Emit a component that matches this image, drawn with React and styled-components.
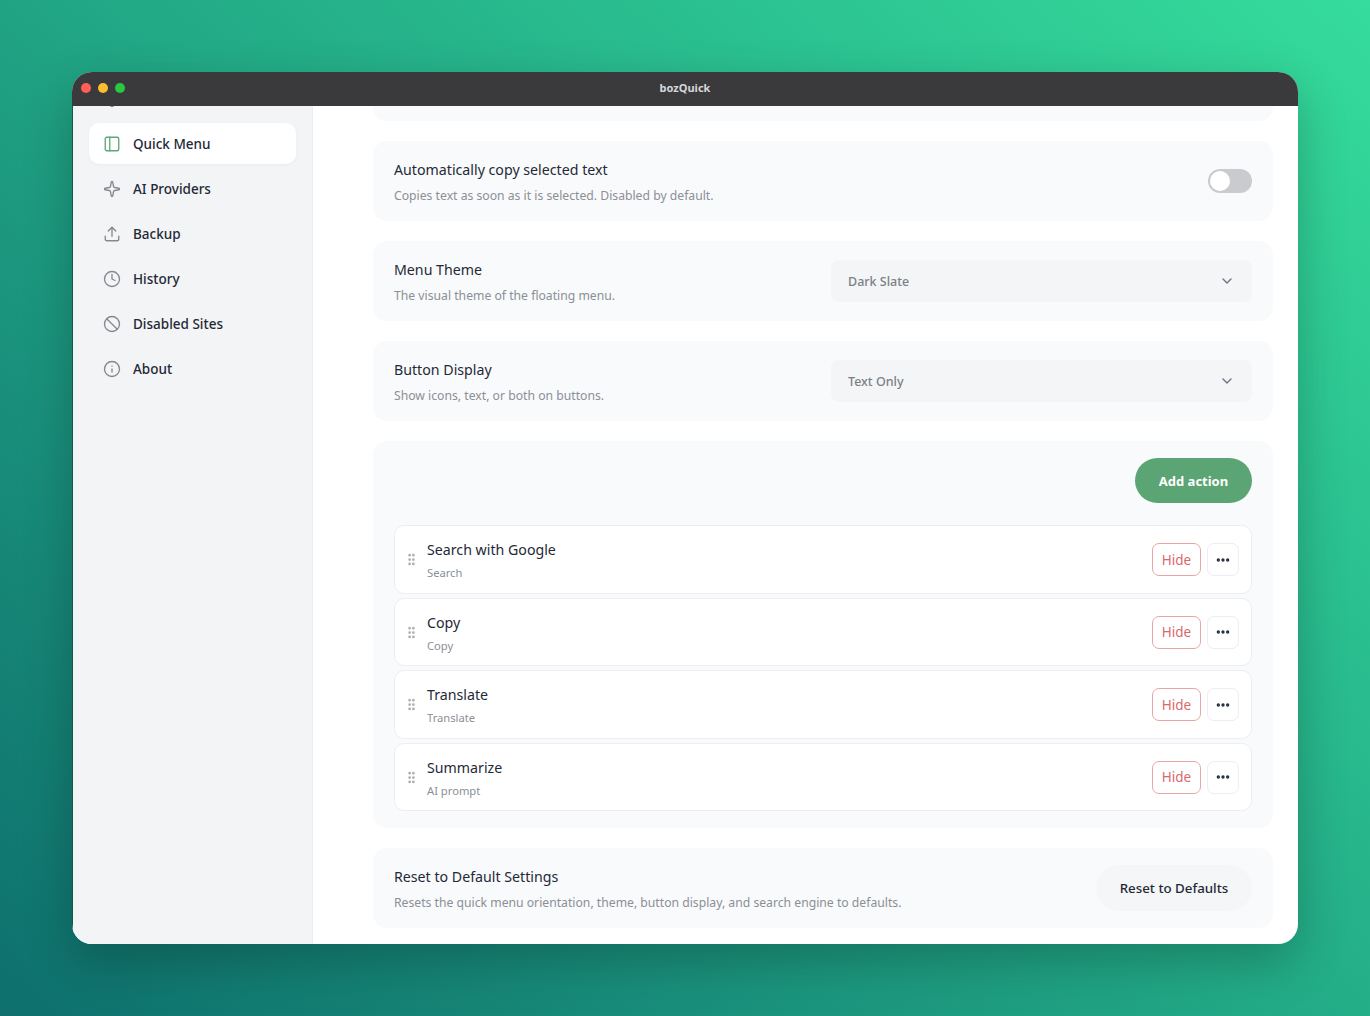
import React from "react";
import styled, { createGlobalStyle } from "styled-components";
import { PanelLeft, Sparkle, Upload, Clock, Ban, Info, ChevronDown, GripVertical, Ellipsis, Settings } from "lucide-react";

const GlobalStyle = createGlobalStyle`
    html, body {
        margin: 0;
        padding: 0;
    }
    body {
        font-family: "Noto Sans", "Open Sans", sans-serif;
        color: #1f2937;
    }
    * {
        box-sizing: border-box;
    }
`;

const Backdrop = styled.div`
    width: 1370px;
    height: 1016px;
    padding: 72px;
    overflow: hidden;
    background: linear-gradient(222deg, #35dc9c 0%, #22a986 50%, #0e6f6d 100%);
`;

const Window = styled.div`
    width: 1226px;
    height: 872px;
    border-radius: 20px;
    overflow: hidden;
    display: flex;
    flex-direction: column;
    background: #fff;
    box-shadow: 0 18px 50px rgba(0, 0, 0, 0.24);
`;

const TitleBar = styled.div`
    position: relative;
    flex: 0 0 34px;
    display: flex;
    align-items: center;
    justify-content: center;
    padding-bottom: 3px;
    background: #3a3a3c;
    z-index: 1;
`;

const Lights = styled.div`
    position: absolute;
    left: 8.5px;
    top: 11px;
    display: flex;
    gap: 7px;
`;

const Light = styled.span`
    width: 10px;
    height: 10px;
    border-radius: 50%;
    background: ${props => props.color};
`;

const WindowTitle = styled.span`
    font-size: 11px;
    font-weight: 700;
    color: #d6d6d8;
`;

const Body = styled.div`
    flex: 1;
    display: flex;
    min-height: 0;
`;

const Sidebar = styled.nav`
    flex: 0 0 241px;
    overflow: hidden;
    padding: 0 16px;
    background: #f3f4f6;
    border-left: 1px solid #17544c;
    border-right: 1px solid #eceef0;
`;

const NavList = styled.div`
    margin-top: -28px;
    display: flex;
    flex-direction: column;
    gap: 4px;
`;

const NavItem = styled.div`
    height: 41px;
    display: flex;
    align-items: center;
    gap: 12px;
    padding: 0 14px;
    border-radius: 10px;
    font-size: 13.5px;
    font-weight: 500;
    color: #1f2937;
    background: ${props => (props.$active ? "#fff" : "transparent")};
    box-shadow: ${props => (props.$active ? "0 1px 3px rgba(0, 0, 0, 0.04)" : "none")};

    svg {
        flex: none;
        color: ${props => (props.$active ? "#5fa777" : "#85898f")};
    }
`;

const Content = styled.main`
    flex: 1;
    overflow: hidden;
    padding: 0 25px 0 60px;
    display: flex;
    flex-direction: column;
    gap: 20px;
`;

const ClippedCard = styled.div`
    flex: 0 0 15px;
    background: #f9fafb;
    border-radius: 0 0 14px 14px;
`;

const Card = styled.section`
    flex: none;
    height: 80px;
    display: flex;
    align-items: center;
    justify-content: space-between;
    padding: 0 21px;
    background: #f9fafb;
    border-radius: 14px;
`;

const CardText = styled.div`
    display: flex;
    flex-direction: column;
    gap: 6px;
    padding-top: 3px;
`;

const CardTitle = styled.div`
    font-size: 14.2px;
    line-height: 20px;
    color: #1f2937;
`;

const CardHint = styled.div`
    font-size: 12.2px;
    line-height: 20px;
    color: #8b8f96;
`;

const Toggle = styled.div`
    width: 44px;
    height: 24px;
    padding: 2px;
    border-radius: 12px;
    background: #c9cbcf;
`;

const ToggleKnob = styled.div`
    width: 20px;
    height: 20px;
    border-radius: 50%;
    background: #fff;
`;

const Select = styled.div`
    width: 421px;
    height: 42px;
    display: flex;
    align-items: center;
    justify-content: space-between;
    padding: 0 17px;
    border-radius: 8px;
    background: #f4f5f7;
    font-size: 12.5px;
    font-weight: 500;
    color: #7b7f86;

    svg {
        color: #6b7280;
    }
`;

const ActionsCard = styled.section`
    flex: none;
    height: 387px;
    display: flex;
    flex-direction: column;
    padding: 17px 21px;
    background: #f9fafb;
    border-radius: 14px;
`;

const ActionsHeader = styled.div`
    display: flex;
    justify-content: flex-end;
    margin-bottom: 22.25px;
`;

const AddButton = styled.button`
    width: 117px;
    height: 45px;
    border: 0;
    border-radius: 23px;
    background: #5ba574;
    color: #fff;
    font-family: inherit;
    font-size: 13px;
    font-weight: 700;
`;

const ActionList = styled.div`
    display: flex;
    flex-direction: column;
    gap: 4px;
`;

const ActionRow = styled.div`
    height: 68.5px;
    display: flex;
    align-items: center;
    padding: 0 12px 0 8px;
    background: #fff;
    border: 1px solid #eceef1;
    border-radius: 10px;
`;

const Grip = styled.div`
    width: 16px;
    margin-right: 8px;
    display: flex;
    justify-content: center;

    svg {
        color: #abaeb3;
    }
`;

const ActionText = styled.div`
    flex: 1;
    display: flex;
    flex-direction: column;
    gap: 4px;
    padding-top: 3px;
`;

const ActionName = styled.div`
    font-size: 14.2px;
    line-height: 20px;
    color: #1f2937;
`;

const ActionType = styled.div`
    font-size: 11.2px;
    line-height: 18px;
    color: #8b8f96;
`;

const HideButton = styled.button`
    width: 49px;
    height: 33px;
    margin-right: 6px;
    padding: 0;
    border: 1px solid #e9a6a8;
    border-radius: 7px;
    background: #fff;
    color: #d9686c;
    font-family: inherit;
    font-size: 13.5px;
`;

const MoreButton = styled.button`
    width: 32px;
    height: 33px;
    padding: 0;
    display: flex;
    align-items: center;
    justify-content: center;
    border: 1px solid #eceef1;
    border-radius: 7px;
    background: #fff;
    color: #1f2937;
`;

const ResetButton = styled.button`
    width: 156px;
    height: 46px;
    padding: 0;
    border: 0;
    border-radius: 23px;
    background: #f5f6f7;
    color: #1f2937;
    font-family: inherit;
    font-size: 13.3px;
    font-weight: 500;
`;

const navItems = [
    { label: "Quick Menu", icon: PanelLeft, active: true },
    { label: "AI Providers", icon: Sparkle },
    { label: "Backup", icon: Upload },
    { label: "History", icon: Clock },
    { label: "Disabled Sites", icon: Ban },
    { label: "About", icon: Info },
];

const actions = [
    { name: "Search with Google", type: "Search" },
    { name: "Copy", type: "Copy" },
    { name: "Translate", type: "Translate" },
    { name: "Summarize", type: "AI prompt" },
];

const App = () => (
    <Backdrop>
        <GlobalStyle />
        <Window>
            <TitleBar>
                <Lights>
                    <Light color="#ff5f57" />
                    <Light color="#febc2e" />
                    <Light color="#28c840" />
                </Lights>
                <WindowTitle>bozQuick</WindowTitle>
            </TitleBar>
            <Body>
                <Sidebar>
                    <NavList>
                        <NavItem>
                            <Settings size={18} strokeWidth={1.8} />
                        </NavItem>
                        {navItems.map(({ label, icon: Icon, active }) => (
                            <NavItem key={label} $active={active}>
                                <Icon size={18} strokeWidth={1.8} />
                                {label}
                            </NavItem>
                        ))}
                    </NavList>
                </Sidebar>
                <Content>
                    <ClippedCard />
                    <Card>
                        <CardText>
                            <CardTitle>Automatically copy selected text</CardTitle>
                            <CardHint>Copies text as soon as it is selected. Disabled by default.</CardHint>
                        </CardText>
                        <Toggle>
                            <ToggleKnob />
                        </Toggle>
                    </Card>
                    <Card>
                        <CardText>
                            <CardTitle>Menu Theme</CardTitle>
                            <CardHint>The visual theme of the floating menu.</CardHint>
                        </CardText>
                        <Select>
                            Dark Slate
                            <ChevronDown size={16} />
                        </Select>
                    </Card>
                    <Card>
                        <CardText>
                            <CardTitle>Button Display</CardTitle>
                            <CardHint>Show icons, text, or both on buttons.</CardHint>
                        </CardText>
                        <Select>
                            Text Only
                            <ChevronDown size={16} />
                        </Select>
                    </Card>
                    <ActionsCard>
                        <ActionsHeader>
                            <AddButton>Add action</AddButton>
                        </ActionsHeader>
                        <ActionList>
                            {actions.map(action => (
                                <ActionRow key={action.name}>
                                    <Grip>
                                        <GripVertical size={15} strokeWidth={2.4} />
                                    </Grip>
                                    <ActionText>
                                        <ActionName>{action.name}</ActionName>
                                        <ActionType>{action.type}</ActionType>
                                    </ActionText>
                                    <HideButton>Hide</HideButton>
                                    <MoreButton>
                                        <Ellipsis size={16} strokeWidth={3} />
                                    </MoreButton>
                                </ActionRow>
                            ))}
                        </ActionList>
                    </ActionsCard>
                    <Card>
                        <CardText>
                            <CardTitle>Reset to Default Settings</CardTitle>
                            <CardHint>Resets the quick menu orientation, theme, button display, and search engine to defaults.</CardHint>
                        </CardText>
                        <ResetButton>Reset to Defaults</ResetButton>
                    </Card>
                </Content>
            </Body>
        </Window>
    </Backdrop>
);

export default App;
